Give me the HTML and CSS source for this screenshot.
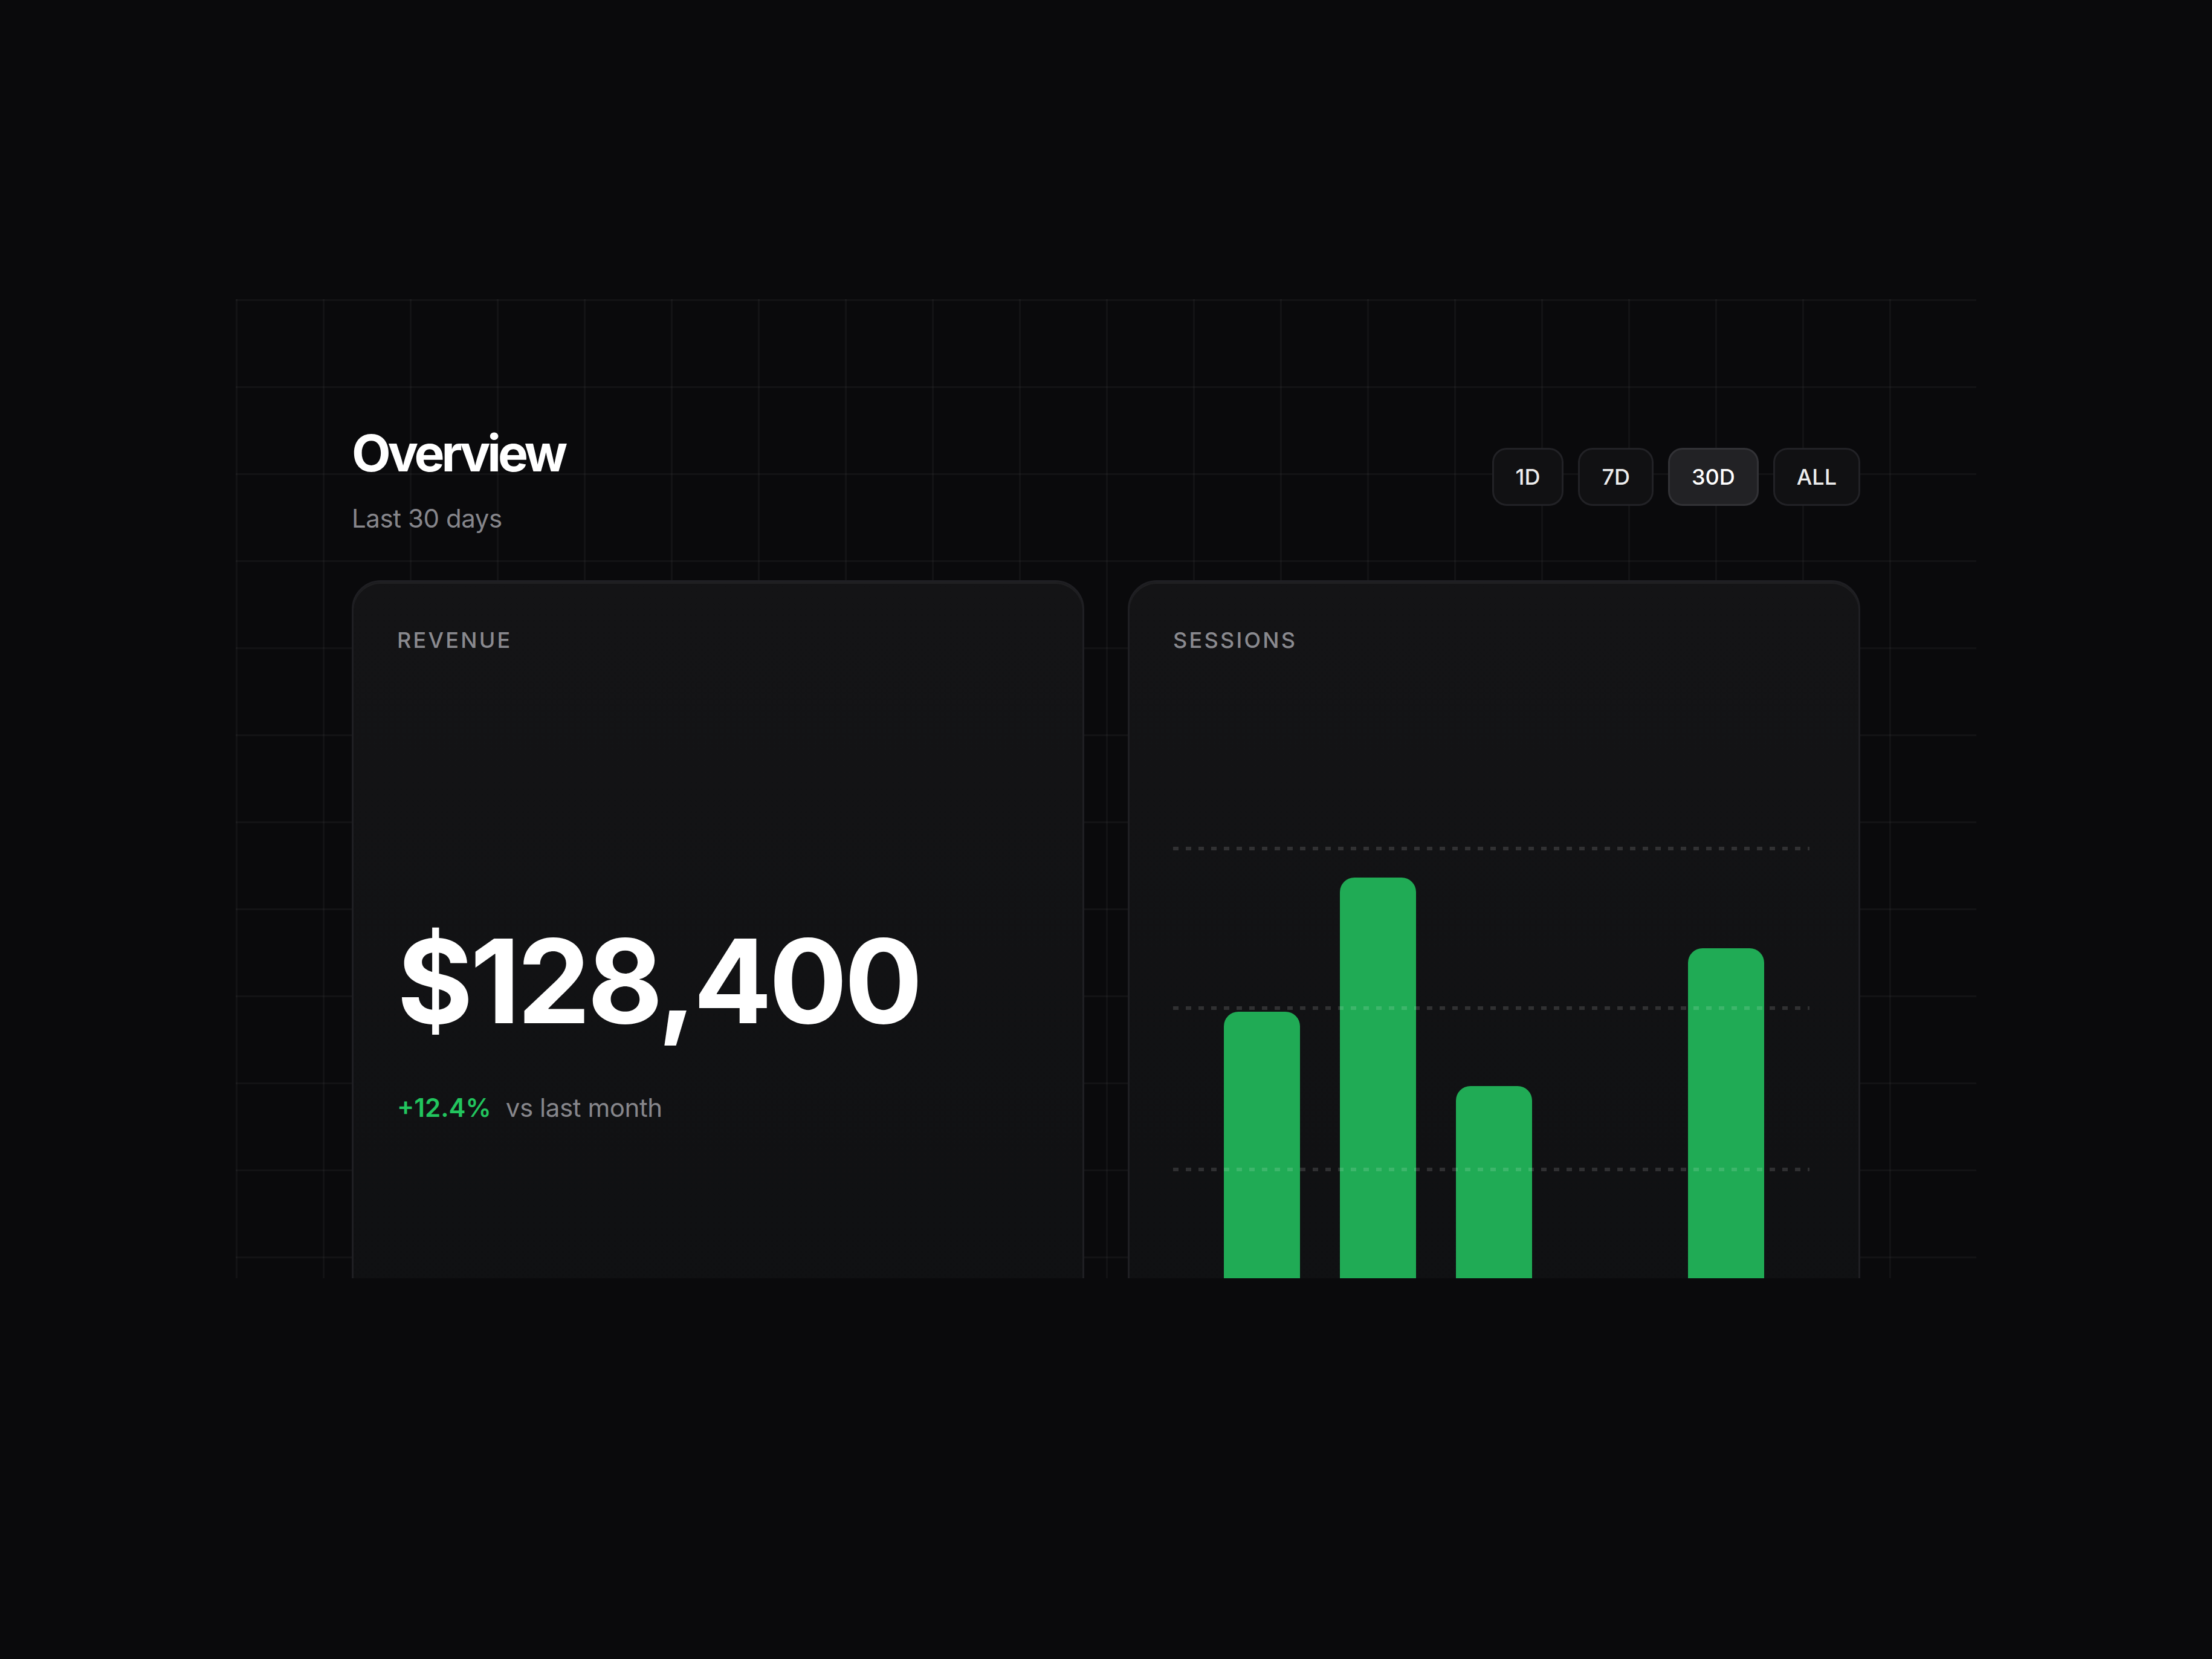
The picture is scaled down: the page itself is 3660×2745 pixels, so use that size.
FILE: index.html
```html
<!DOCTYPE html>
<html lang="en">
<head>
<meta charset="utf-8">
<title>Overview</title>
<link rel="stylesheet" href="styles.css">
</head>
<body>
<main class="stage">
  <section class="frame">
    <header class="header">
      <div class="heading">
        <h1 class="title">Overview</h1>
        <p class="subtitle">Last 30 days</p>
      </div>
      <div class="ranges">
        <button class="range">1D</button>
        <button class="range">7D</button>
        <button class="range is-active">30D</button>
        <button class="range">ALL</button>
      </div>
    </header>
    <div class="cards">
      <article class="card">
        <div class="label">REVENUE</div>
        <div class="value">$128,400</div>
        <div class="delta"><span class="delta-up">+12.4%</span><span class="delta-note">vs last month</span></div>
      </article>
      <article class="card">
        <div class="label">SESSIONS</div>
        <div class="chart">
          <div class="gridline g1"></div>
          <div class="gridline g2"></div>
          <div class="gridline g3"></div>
          <div class="bar" style="height:175px"></div>
          <div class="bar" style="height:249px"></div>
          <div class="bar" style="height:134px"></div>
          <div class="bar" style="height:18px"></div>
          <div class="bar" style="height:210px"></div>
        </div>
      </article>
    </div>
  </section>
</main>
</body>
</html>
```
FILE: styles.css
```css
html {
  zoom: 3;
  background: #0a0a0c;
}
body {
  margin: 0;
  background: #0a0a0c;
  font-family: Inter, "Noto Sans", "Liberation Sans", sans-serif;
  color: #fafafa;
}
.stage {
  height: 915px;
  padding-top: 165px;
  box-sizing: border-box;
}
.frame {
  width: 960px;
  height: 540px;
  margin: 0 auto;
  box-sizing: border-box;
  padding: 68px 64px 0;
  overflow: hidden;
  background-color: #0a0a0c;
  background-image:
    linear-gradient(to right, rgba(255,255,255,0.035) 1px, transparent 1px),
    linear-gradient(to bottom, rgba(255,255,255,0.035) 1px, transparent 1px);
  background-size: 48px 48px;
}
.header {
  display: flex;
  justify-content: space-between;
  align-items: center;
}
.title {
  margin: 0;
  font-size: 28px;
  line-height: 34px;
  font-weight: 700;
  letter-spacing: -0.06em;
  color: #ffffff;
}
.subtitle {
  margin: 9px 0 0;
  font-size: 14px;
  line-height: 20px;
  letter-spacing: -0.01em;
  color: #86868b;
}
.ranges {
  display: flex;
  gap: 8px;
  margin-top: -3px;
}
.range {
  height: 32px;
  padding: 0 12px;
  border: 1px solid #222226;
  border-radius: 8px;
  background: #111113;
  color: #ededed;
  font-family: inherit;
  font-size: 12px;
  font-weight: 500;
  line-height: 30px;
}
.range.is-active {
  background: #222225;
  border-color: #323236;
  color: #ffffff;
}
.cards {
  display: grid;
  grid-template-columns: 1fr 1fr;
  gap: 24px;
  margin-top: 24px;
}
.card {
  border: 1px solid #1f1f23;
  border-radius: 16px;
  padding: 24px;
  background: linear-gradient(180deg, #141416 0%, #0f1012 100%);
  box-shadow: inset 0 1px 0 rgba(255,255,255,0.05);
}
.label {
  font-size: 12px;
  line-height: 16px;
  font-weight: 500;
  letter-spacing: 0.09em;
  color: #8a8a8f;
}
.value {
  margin-top: 148px;
  font-size: 64px;
  line-height: 64px;
  font-weight: 700;
  letter-spacing: -0.025em;
  color: #ffffff;
}
.delta {
  margin-top: 28px;
  display: flex;
  gap: 8px;
  font-size: 14px;
  line-height: 20px;
}
.delta-up {
  color: #22c55e;
  font-weight: 600;
}
.delta-note {
  color: #86868b;
  letter-spacing: -0.01em;
}
.chart {
  position: relative;
  margin-top: 18px;
  height: 354px;
  padding: 0 28px;
  display: flex;
  align-items: flex-end;
  justify-content: space-between;
}
.bar {
  width: 42px;
  background: #20ab55;
  border-radius: 8px 8px 0 0;
}
.gridline {
  position: absolute;
  left: 0;
  right: 3px;
  height: 2px;
  z-index: 1;
  background: repeating-linear-gradient(90deg, rgba(255,255,255,0.13) 0 3px, transparent 3px 7px);
}
.g1 { top: 88px; }
.g2 { top: 176px; }
.g3 { top: 265px; }
```
